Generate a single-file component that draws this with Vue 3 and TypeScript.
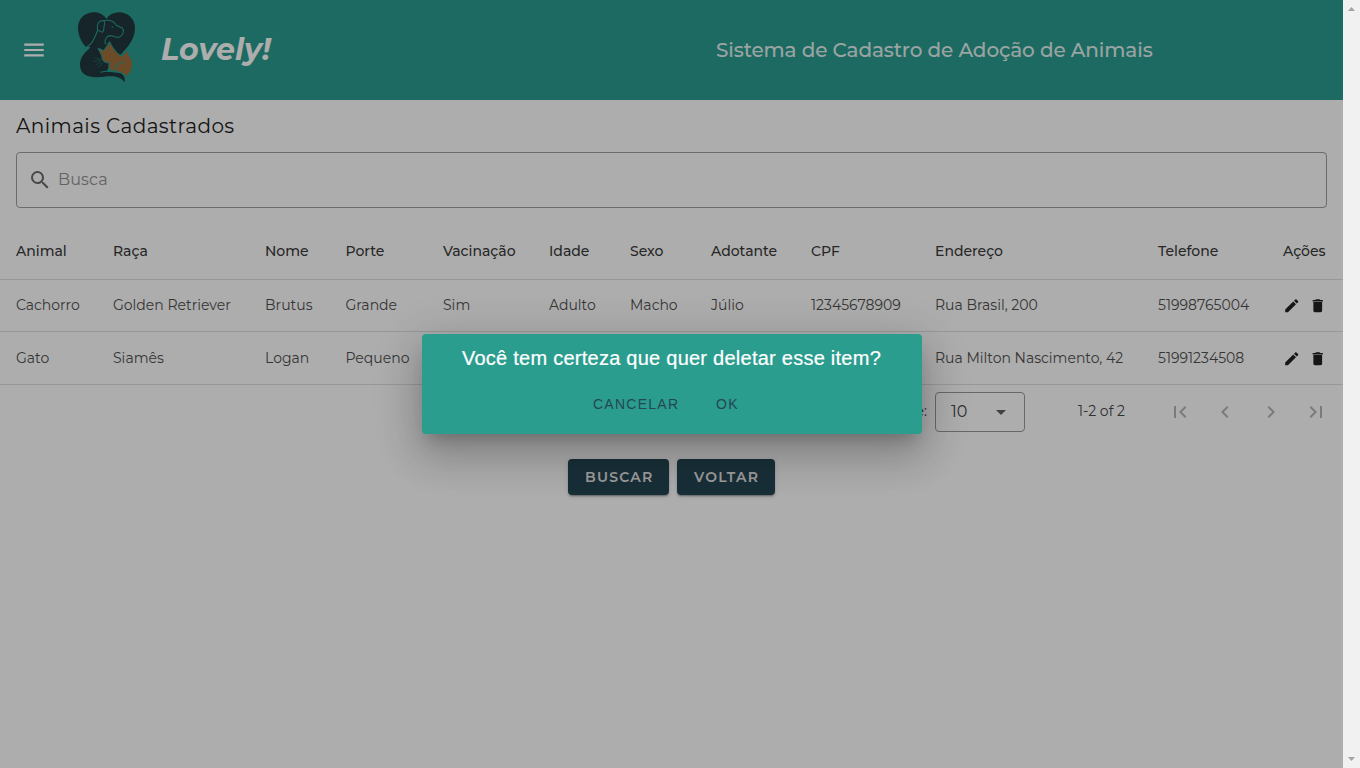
<script setup lang="ts">
const headers: string[] = [
  'Animal', 'Raça', 'Nome', 'Porte', 'Vacinação', 'Idade',
  'Sexo', 'Adotante', 'CPF', 'Endereço', 'Telefone', 'Ações',
]

const rows: string[][] = [
  [
    'Cachorro', 'Golden Retriever', 'Brutus', 'Grande', 'Sim', 'Adulto',
    'Macho', 'Júlio', '12345678909', 'Rua Brasil, 200', '51998765004',
  ],
  ['Gato', 'Siamês', 'Logan', 'Pequeno', '', '', '', '', '', 'Rua Milton Nascimento, 42', '51991234508'],
]

const pagerIcons: string[] = [
  'M18.41,16.59L13.82,12L18.41,7.41L17,6L11,12L17,18L18.41,16.59M6,6H8V18H6V6Z',
  'M15.41,16.58L10.83,12L15.41,7.41L14,6L8,12L14,18L15.41,16.58Z',
  'M8.59,16.58L13.17,12L8.59,7.41L10,6L16,12L10,18L8.59,16.58Z',
  'M5.59,7.41L10.18,12L5.59,16.59L7,18L13,12L7,6L5.59,7.41M16,6H18V18H16V6Z',
]
</script>

<template>
  <div class="window">
    <div class="page">
      <header class="bar">
        <svg class="menu" viewBox="0 0 24 24"><path d="M3,6H21V8H3V6M3,11H21V13H3V11M3,16H21V18H3V16Z" /></svg>
        <svg class="logo" viewBox="0 0 225 240">
          <path class="ink" d="M48 126C34 111 24 91 24 69C24 41 45 22 72 22C88 22 101 30 109 41C119 28 132 22 147 22C174 22 195 42 195 69C195 101 175 124 154 147L145 153L126 126L119 110L82 130L66 126Z" />
          <path class="ink" d="M84 58C84 48 94 45 104 47C118 45 130 48 137 60L156 69C162 76 160 89 151 95L139 97L128 93C111 90 104 103 106 118L119 111L127 128L128 160L110 200L150 203C161 209 167 219 164 232C154 218 139 213 113 214C85 219 44 219 34 197C24 173 34 154 49 139C69 123 78 100 84 82Z" />
          <path class="fur" d="M84 130L102 137L119 111L127 126C135 136 143 149 156 153L171 137L175 150C190 167 191 194 170 213C164 207 157 202 142 199L122 196C113 186 115 178 119 173C105 176 96 167 96 153Z" />
          <path class="line" d="M46 129C69 118 75 94 83 76C80 60 84 48 96 47C108 46 103 57 102 66C102 77 98 85 93 80C88 77 86 79 84 75M98 47C117 43 132 48 139 61L155 68C165 74 160 90 149 96C140 100 135 93 124 92C110 91 103 101 106 118" />
          <path class="line" d="M84 130L102 137L119 111L127 126C134 137 143 149 156 153L171 137M84 130L96 153C95 168 108 176 119 173C114 188 118 197 132 200C149 200 163 206 169 215M137 200C135 181 148 169 163 174M91 202C109 197 133 195 149 203" />
          <path class="whisker" d="M93 163L73 158M92 166L70 169M94 169L76 182M98 172L86 188" />
          <circle class="eye" cx="127" cy="66" r="2.5" />
        </svg>
        <span class="brand">Lovely!</span>
        <span class="system">Sistema de Cadastro de Adoção de Animais</span>
      </header>

      <h1 class="title">Animais Cadastrados</h1>
      <div class="search">
        <svg viewBox="0 0 24 24"><path d="M9.5,3A6.5,6.5 0 0,1 16,9.5C16,11.11 15.41,12.59 14.44,13.73L14.71,14H15.5L20.5,19L19,20.5L14,15.5V14.71L13.73,14.44C12.59,15.41 11.11,16 9.5,16A6.5,6.5 0 0,1 3,9.5A6.5,6.5 0 0,1 9.5,3M9.5,5C7,5 5,7 5,9.5C5,12 7,14 9.5,14C12,14 14,12 14,9.5C14,7 12,5 9.5,5Z" /></svg>
        <span>Busca</span>
      </div>

      <div class="table">
        <div class="row head">
          <div v-for="h in headers" :key="h">{{ h }}</div>
        </div>
        <div v-for="(row, i) in rows" :key="i" class="row">
          <div v-for="(cell, j) in row" :key="j">{{ cell }}</div>
          <div class="actions">
            <svg viewBox="0 0 24 24"><path d="M20.71,7.04C21.1,6.65 21.1,6 20.71,5.63L18.37,3.29C18,2.9 17.35,2.9 16.96,3.29L15.12,5.12L18.87,8.87M3,17.25V21H6.75L17.81,9.93L14.06,6.18L3,17.25Z" /></svg>
            <svg viewBox="0 0 24 24"><path d="M19,4H15.5L14.5,3H9.5L8.5,4H5V6H19M6,19A2,2 0 0,0 8,21H16A2,2 0 0,0 18,19V7H6V19Z" /></svg>
          </div>
        </div>
      </div>

      <div class="footer">
        <span class="per-page">Items per page:</span>
        <div class="select">
          <span>10</span>
          <svg viewBox="0 0 24 24"><path d="M7,10L12,15L17,10H7Z" /></svg>
        </div>
        <div class="range">1-2 of 2</div>
        <div class="pager">
          <svg v-for="d in pagerIcons" :key="d" viewBox="0 0 24 24"><path :d="d" /></svg>
        </div>
      </div>

      <div class="buttons">
        <button class="first">BUSCAR</button>
        <button>VOLTAR</button>
      </div>

      <div class="scrim"></div>
      <div class="overlay">
        <div class="dialog">
          <div class="question">Você tem certeza que quer deletar esse item?</div>
          <div class="choices">
            <span class="cancel">CANCELAR</span>
            <span class="ok">OK</span>
          </div>
        </div>
      </div>
    </div>
    <div class="scrollbar">
      <svg viewBox="0 0 17 17"><path d="M5 11H12L8.5 7Z" /></svg>
      <svg viewBox="0 0 17 17"><path d="M5 6H12L8.5 10Z" /></svg>
    </div>
  </div>
</template>

<style>
body {
  margin: 0;
  overflow: hidden;
}
</style>

<style scoped>
* {
  box-sizing: border-box;
}
.window {
  display: flex;
  height: 768px;
  font-family: Montserrat, Inter, sans-serif;
  color: #212121;
  white-space: nowrap;
}
.page {
  position: relative;
  width: 1343px;
  height: 768px;
  background: #fff;
  overflow: hidden;
}
.bar {
  display: flex;
  align-items: center;
  height: 100px;
  background: #2a9d8f;
  color: #fff;
}
.menu {
  width: 26px;
  height: 26px;
  margin-left: 21px;
  fill: #fff;
}
.logo {
  width: 75px;
  height: 80px;
  margin: -10px 0 0 23px;
}
.ink {
  fill: #20373e;
}
.fur {
  fill: #a0703c;
}
.line {
  fill: none;
  stroke: #2a9d8f;
  stroke-width: 3.2;
}
.whisker {
  fill: none;
  stroke: #2a8278;
  stroke-width: 1.5;
}
.eye {
  fill: #2a9d8f;
}
.brand {
  width: 555px;
  margin-left: 16px;
  font-size: 30px;
  font-weight: 700;
  font-style: italic;
  line-height: 36px;
  letter-spacing: 0.1px;
}
.system {
  font-size: 20px;
  font-weight: 500;
  line-height: 28px;
  letter-spacing: -0.12px;
  opacity: 0.87;
}
.title {
  margin: 10px 0 0 16px;
  height: 32px;
  font-size: 20px;
  font-weight: 400;
  line-height: 32px;
  letter-spacing: 0.42px;
}
.search {
  display: flex;
  align-items: center;
  width: 1311px;
  height: 56px;
  margin: 10px 16px 0;
  padding: 0 0 0 11px;
  border: 1px solid #9e9e9e;
  border-radius: 4px;
  font-size: 16px;
  font-weight: 400;
  line-height: 24px;
  letter-spacing: 0.15px;
  color: #929292;
}
.search span {
  padding-bottom: 1px;
}
.search svg {
  width: 24px;
  height: 24px;
  margin-right: 6px;
  fill: #6a6a6a;
}
.table {
  margin-top: 16px;
}
.row {
  display: grid;
  grid-template-columns: 97px 152px 80.5px 97.5px 106px 81px 81px 100px 124px 223px 125px 60px;
  align-items: center;
  height: 53px;
  padding: 0 0 0 16px;
  border-bottom: 1px solid #e0e0e0;
  font-size: 14px;
  font-weight: 400;
  line-height: 20px;
  color: #505050;
}
.row:nth-child(2) {
  height: 52px;
  padding-bottom: 1px;
}
.row.head {
  height: 56px;
  padding-bottom: 1px;
  font-weight: 500;
  color: #3a3a3a;
}
.actions {
  display: flex;
  gap: 8px;
  padding-top: 1px;
}
.row:nth-child(2) .actions {
  padding-top: 2px;
}
.actions svg {
  width: 17.5px;
  height: 17.5px;
  fill: #212121;
}
.footer {
  display: flex;
  align-items: center;
  height: 54px;
  font-size: 14px;
  font-weight: 400;
  color: #484848;
}
.per-page {
  width: 927px;
  padding-bottom: 2px;
  text-align: right;
}
.select {
  display: flex;
  align-items: center;
  justify-content: space-between;
  width: 90px;
  height: 40px;
  margin-left: 8px;
  padding: 0 11px 0 15px;
  border: 1px solid #9a9a9a;
  border-radius: 4px;
  font-size: 16px;
}
.select span {
  padding-bottom: 1px;
}
.select svg {
  width: 24px;
  height: 24px;
  fill: #606060;
}
.range {
  width: 89.5px;
  margin-left: 53px;
  padding-bottom: 2px;
}
.pager {
  display: flex;
  gap: 21.6px;
}
.pager svg {
  width: 24px;
  height: 24px;
  fill: #b5b5b5;
}
.buttons {
  display: flex;
  gap: 8px;
  margin: 20px 0 0 568px;
}
.buttons button {
  width: 98px;
  height: 36px;
  padding: 0 0 0 17px;
  border: 0;
  border-radius: 4px;
  background: #264653;
  box-shadow: 0 3px 1px -2px rgba(0, 0, 0, 0.2), 0 2px 2px rgba(0, 0, 0, 0.14), 0 1px 5px rgba(0, 0, 0, 0.12);
  color: #e6e6e6;
  font-family: inherit;
  font-size: 14px;
  font-weight: 600;
  letter-spacing: 1.25px;
  text-align: left;
}
.buttons .first {
  width: 101px;
}
.scrim {
  position: absolute;
  inset: 0;
  background: rgba(0, 0, 0, 0.32);
}
.overlay {
  position: absolute;
  inset: 0;
  display: flex;
  align-items: center;
  justify-content: center;
}
.dialog {
  width: 500px;
  height: 100px;
  margin-left: 1px;
  border-radius: 4px;
  background: #2a9d8f;
  box-shadow: 0 11px 15px -7px rgba(0, 0, 0, 0.2), 0 24px 38px 3px rgba(0, 0, 0, 0.14), 0 9px 46px 8px rgba(0, 0, 0, 0.12);
  font-family: "Liberation Sans", Arial, sans-serif;
}
.question {
  padding: 8px 0 0 40px;
  font-size: 20px;
  line-height: 32px;
  letter-spacing: 0.25px;
  color: #fff;
  -webkit-text-stroke: 0.2px #fff;
}
.choices {
  display: flex;
  margin-top: 20px;
  padding-left: 171px;
  font-size: 14px;
  line-height: 20px;
  letter-spacing: 1.25px;
  color: #264653;
}
.cancel {
  width: 123px;
}
.scrollbar {
  display: flex;
  flex-direction: column;
  justify-content: space-between;
  width: 17px;
  height: 768px;
  background: #f1f1f1;
}
.scrollbar svg {
  width: 17px;
  height: 17px;
  fill: #a3a3a3;
}
</style>
